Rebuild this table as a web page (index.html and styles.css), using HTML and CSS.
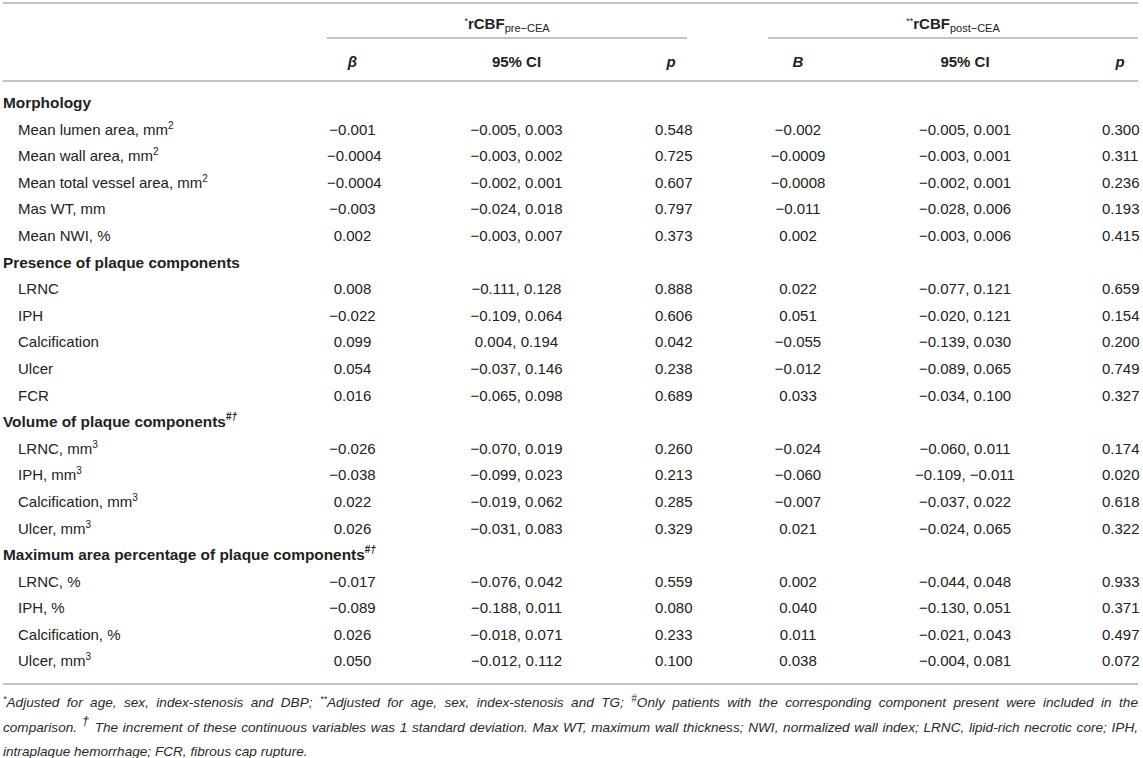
FILE: index.html
```html
<!DOCTYPE html>
<html lang="en">
<head>
<meta charset="utf-8">
<title>Table</title>
<link rel="stylesheet" href="styles.css">
</head>
<body>
<div class="wrap">
<table class="tbl">
  <colgroup>
    <col class="c-label">
    <col class="c-b1">
    <col class="c-ci1">
    <col class="c-p1">
    <col class="c-gap">
    <col class="c-b2">
    <col class="c-ci2">
    <col class="c-p2">
  </colgroup>
  <thead>
    <tr class="h1">
      <th></th>
      <th class="grp" colspan="3"><sup class="ast">*</sup>rCBF<sub>pre−CEA</sub></th>
      <th></th>
      <th class="grp" colspan="3"><sup class="ast">**</sup>rCBF<sub>post−CEA</sub></th>
    </tr>
    <tr class="h2">
      <th></th>
      <th><i>β</i></th>
      <th>95% CI</th>
      <th><i>p</i></th>
      <th></th>
      <th><i>B</i></th>
      <th>95% CI</th>
      <th><i>p</i></th>
    </tr>
  </thead>
  <tbody>
    <tr class="sec first"><td colspan="8">Morphology</td></tr>
    <tr><td class="lbl">Mean lumen area, mm<sup>2</sup></td><td>−0.001</td><td>−0.005, 0.003</td><td>0.548</td><td></td><td>−0.002</td><td>−0.005, 0.001</td><td>0.300</td></tr>
    <tr><td class="lbl">Mean wall area, mm<sup>2</sup></td><td>−0.0004</td><td>−0.003, 0.002</td><td>0.725</td><td></td><td>−0.0009</td><td>−0.003, 0.001</td><td>0.311</td></tr>
    <tr><td class="lbl">Mean total vessel area, mm<sup>2</sup></td><td>−0.0004</td><td>−0.002, 0.001</td><td>0.607</td><td></td><td>−0.0008</td><td>−0.002, 0.001</td><td>0.236</td></tr>
    <tr><td class="lbl">Mas WT, mm</td><td>−0.003</td><td>−0.024, 0.018</td><td>0.797</td><td></td><td>−0.011</td><td>−0.028, 0.006</td><td>0.193</td></tr>
    <tr><td class="lbl">Mean NWI, %</td><td>0.002</td><td>−0.003, 0.007</td><td>0.373</td><td></td><td>0.002</td><td>−0.003, 0.006</td><td>0.415</td></tr>
    <tr class="sec"><td colspan="8">Presence of plaque components</td></tr>
    <tr><td class="lbl">LRNC</td><td>0.008</td><td>−0.111, 0.128</td><td>0.888</td><td></td><td>0.022</td><td>−0.077, 0.121</td><td>0.659</td></tr>
    <tr><td class="lbl">IPH</td><td>−0.022</td><td>−0.109, 0.064</td><td>0.606</td><td></td><td>0.051</td><td>−0.020, 0.121</td><td>0.154</td></tr>
    <tr><td class="lbl">Calcification</td><td>0.099</td><td>0.004, 0.194</td><td>0.042</td><td></td><td>−0.055</td><td>−0.139, 0.030</td><td>0.200</td></tr>
    <tr><td class="lbl">Ulcer</td><td>0.054</td><td>−0.037, 0.146</td><td>0.238</td><td></td><td>−0.012</td><td>−0.089, 0.065</td><td>0.749</td></tr>
    <tr><td class="lbl">FCR</td><td>0.016</td><td>−0.065, 0.098</td><td>0.689</td><td></td><td>0.033</td><td>−0.034, 0.100</td><td>0.327</td></tr>
    <tr class="sec"><td colspan="8">Volume of plaque components<sup class="fn">#<i>†</i></sup></td></tr>
    <tr><td class="lbl">LRNC, mm<sup>3</sup></td><td>−0.026</td><td>−0.070, 0.019</td><td>0.260</td><td></td><td>−0.024</td><td>−0.060, 0.011</td><td>0.174</td></tr>
    <tr><td class="lbl">IPH, mm<sup>3</sup></td><td>−0.038</td><td>−0.099, 0.023</td><td>0.213</td><td></td><td>−0.060</td><td>−0.109, −0.011</td><td>0.020</td></tr>
    <tr><td class="lbl">Calcification, mm<sup>3</sup></td><td>0.022</td><td>−0.019, 0.062</td><td>0.285</td><td></td><td>−0.007</td><td>−0.037, 0.022</td><td>0.618</td></tr>
    <tr><td class="lbl">Ulcer, mm<sup>3</sup></td><td>0.026</td><td>−0.031, 0.083</td><td>0.329</td><td></td><td>0.021</td><td>−0.024, 0.065</td><td>0.322</td></tr>
    <tr class="sec"><td colspan="8">Maximum area percentage of plaque components<sup class="fn">#<i>†</i></sup></td></tr>
    <tr><td class="lbl">LRNC, %</td><td>−0.017</td><td>−0.076, 0.042</td><td>0.559</td><td></td><td>0.002</td><td>−0.044, 0.048</td><td>0.933</td></tr>
    <tr><td class="lbl">IPH, %</td><td>−0.089</td><td>−0.188, 0.011</td><td>0.080</td><td></td><td>0.040</td><td>−0.130, 0.051</td><td>0.371</td></tr>
    <tr><td class="lbl">Calcification, %</td><td>0.026</td><td>−0.018, 0.071</td><td>0.233</td><td></td><td>0.011</td><td>−0.021, 0.043</td><td>0.497</td></tr>
    <tr class="last"><td class="lbl">Ulcer, mm<sup>3</sup></td><td>0.050</td><td>−0.012, 0.112</td><td>0.100</td><td></td><td>0.038</td><td>−0.004, 0.081</td><td>0.072</td></tr>
  </tbody>
</table>
<div class="notes">
  <p class="line"><sup>*</sup>Adjusted for age, sex, index-stenosis and DBP; <sup>**</sup>Adjusted for age, sex, index-stenosis and TG; <sup class="hash">#</sup>Only patients with the corresponding component present were included in the</p>
  <p class="line">comparison. <sup class="dag">†</sup> The increment of these continuous variables was 1 standard deviation. Max WT, maximum wall thickness; NWI, normalized wall index; LRNC, lipid-rich necrotic core; IPH,</p>
  <p class="line end">intraplaque hemorrhage; FCR, fibrous cap rupture.</p>
</div>
</div>
</body>
</html>
```

FILE: styles.css
```css
* { box-sizing: border-box; }

body {
  margin: 0;
  background: #ffffff;
  color: #222222;
  font-family: "Liberation Sans", Arial, Helvetica, sans-serif;
}

.wrap {
  padding: 2px 5px 0 3px;
}

.tbl {
  width: 1135px;
  table-layout: fixed;
  border-collapse: separate;
  border-spacing: 0;
  font-size: 15px;
}

.c-label { width: 324px; }
.c-b1 { width: 51px; }
.c-ci1 { width: 277px; }
.c-p1 { width: 32px; }
.c-gap { width: 81px; }
.c-b2 { width: 60px; }
.c-ci2 { width: 274px; }
.c-p2 { width: 36px; }

.tbl th {
  font-weight: bold;
  text-align: center;
  line-height: 18px;
  padding: 0;
  white-space: nowrap;
}

.h1 th {
  border-top: 2px solid #c4c4c4;
  padding: 11px 0 5px;
}

.h1 th.grp {
  border-bottom: 2px solid #c4c4c4;
  padding-bottom: 4px;
}

.h1 th:not(.grp) {
  padding-bottom: 6px;
}

.h2 th {
  padding: 14px 0 9px;
  border-bottom: 2px solid #c4c4c4;
}

.ast {
  font-weight: normal;
  font-size: 9px;
  vertical-align: 5px;
  line-height: 0;
}

.tbl sub {
  font-weight: normal;
  font-size: 11px;
  vertical-align: -3px;
  line-height: 0;
}

.tbl td {
  padding: 4px 0;
  line-height: 18.6px;
  text-align: center;
  white-space: nowrap;
}

.tbl td.lbl {
  text-align: left;
  padding-left: 15px;
}

.tbl tr.sec td {
  text-align: left;
  font-weight: bold;
  font-size: 15.4px;
  padding-left: 0;
}

.tbl tr.first td {
  padding-top: 12px;
}

.tbl tr.last td {
  padding-bottom: 12px;
  border-bottom: 2px solid #c4c4c4;
}

.tbl td sup {
  font-size: 10px;
  line-height: 0;
  vertical-align: 6px;
}

.tbl td sup.fn {
  font-size: 10px;
  font-weight: bold;
  vertical-align: 7px;
}

.notes {
  width: 1135px;
  margin-top: 6px;
  font-size: 13.6px;
  font-style: italic;
  color: #2a2a2a;
}

.notes .line {
  margin: 0;
  line-height: 24.5px;
  white-space: nowrap;
  text-align: justify;
  text-align-last: justify;
}

.notes .line.end {
  text-align-last: left;
}

.notes sup {
  font-size: 9px;
  line-height: 0;
  vertical-align: 5px;
}

.notes sup.hash {
  font-size: 10px;
}

.notes sup.dag {
  font-size: 13px;
  vertical-align: 7px;
}
```
